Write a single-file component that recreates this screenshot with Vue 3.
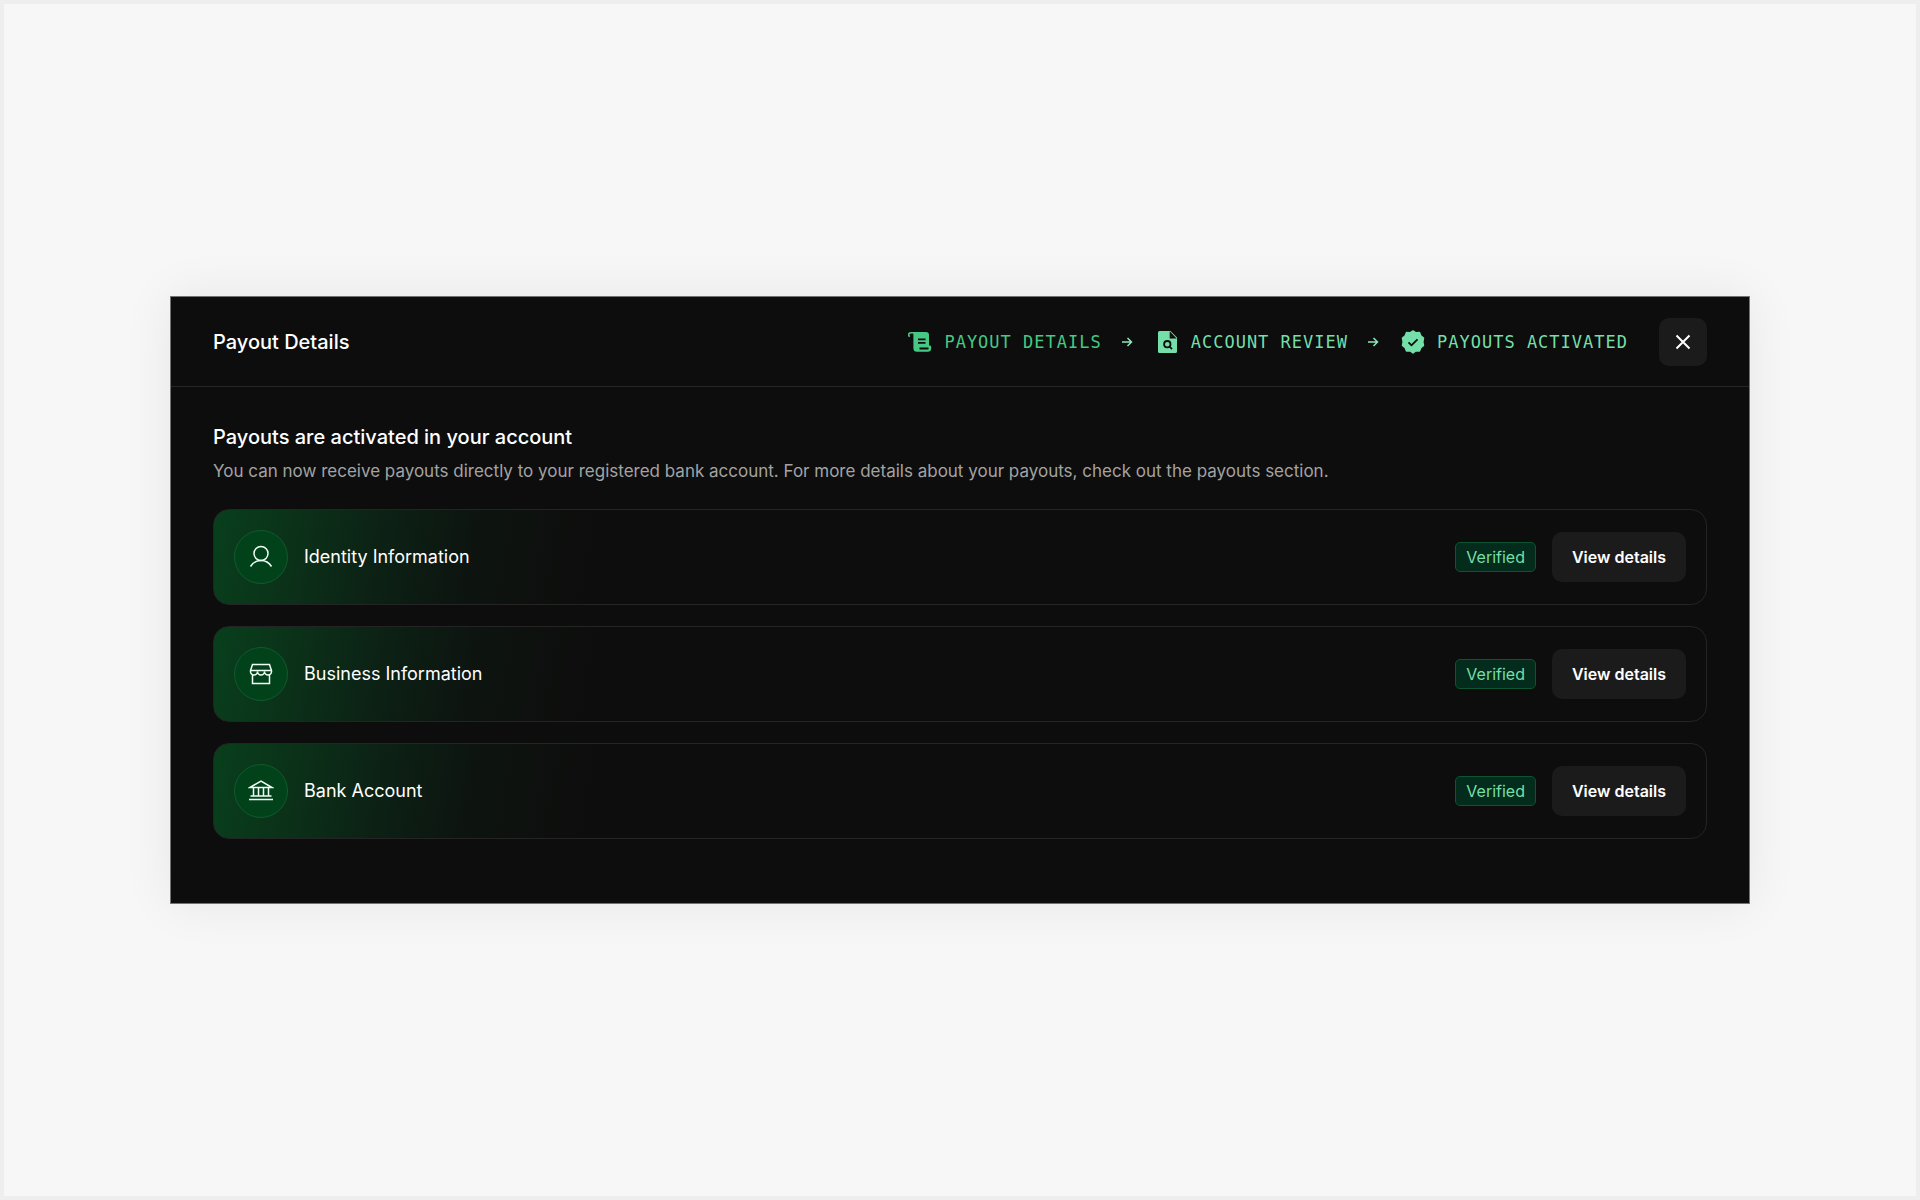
<script setup>
const steps = [
  { id: 'details', label: 'Payout Details' },
  { id: 'review', label: 'Account Review' },
  { id: 'activated', label: 'Payouts Activated' },
]

const sections = [
  { id: 'identity', title: 'Identity Information', status: 'Verified' },
  { id: 'business', title: 'Business Information', status: 'Verified' },
  { id: 'bank', title: 'Bank Account', status: 'Verified' },
]
</script>

<template>
  <main class="page">
    <section class="dialog" role="dialog" aria-labelledby="dialog-title">
      <header class="dialog-header">
        <h1 id="dialog-title" class="title">Payout Details</h1>

        <ol class="steps">
          <li v-for="(step, index) in steps" :key="step.id" class="step" :class="step.id">
            <svg v-if="index > 0" class="arrow" viewBox="0 0 17 16" aria-hidden="true">
              <path d="M4 8h9.5M9.5 4l4 4-4 4" />
            </svg>
            <svg v-if="step.id === 'details'" class="step-icon" viewBox="0 0 24 24" aria-hidden="true">
              <path class="line" d="M1.500 6.800C-.2 4 1 2.800 3.500 2.800h3" />
              <path d="M4 2h14a3 3 0 0 1 3 3v10.500h.8a1.400 1.400 0 0 1 1.400 1.400v1.300a3.600 3.600 0 0 1-3.600 3.600H9A3.600 3.600 0 0 1 5.400 18.200V5A3 3 0 0 0 4 2Z" />
              <path class="cut" d="M10 9.300h7.500M10 12.800h7.500M11.500 18.500h9" />
            </svg>
            <svg v-else-if="step.id === 'review'" class="step-icon" viewBox="0 0 24 24" aria-hidden="true">
              <path d="M4.500 1h11L22 7.500V21.500a1.500 1.500 0 0 1-1.500 1.500h-16A1.500 1.500 0 0 1 3 21.500v-19A1.500 1.500 0 0 1 4.500 1Z" />
              <path class="cut" d="M15.600 3.500v4h3.900z" />
              <circle class="cut" cx="12.300" cy="14.200" r="3.200" />
              <path class="cut" d="m14.600 16.500 2.400 2.600" />
            </svg>
            <svg v-else class="step-icon" viewBox="0 0 24 24" aria-hidden="true">
              <path class="seal" d="M12 1l3 1.800 3.500-.2 1.300 3.200 2.700 2.300L21.800 12l.7 3.400-2.700 2.300-1.300 3.200-3.500-.2L12 23l-3-2.300-3.500.2-1.300-3.200-2.700-2.300.7-3.400-.7-3.900 2.700-2.300 1.300-3.200 3.500.2z" />
              <path class="cut" d="m7.500 12.300 3 3 6-6" />
            </svg>
            <span>{{ step.label }}</span>
          </li>
        </ol>

        <button class="close" type="button" aria-label="Close">
          <svg viewBox="0 0 16 16" aria-hidden="true"><path d="m1.500 1.500 13 13m0-13-13 13" /></svg>
        </button>
      </header>

      <div class="dialog-body">
        <h2 class="heading">Payouts are activated in your account</h2>
        <p class="description">
          You can now receive payouts directly to your registered bank account. For more details about your payouts, check out the payouts section.
        </p>

        <ul class="sections">
          <li v-for="section in sections" :key="section.id" class="section">
            <span class="badge-icon">
              <svg v-if="section.id === 'identity'" viewBox="0 0 26 26" aria-hidden="true">
                <circle cx="13" cy="9.500" r="7" />
                <path d="M2.500 22.500C5 18.500 8.500 16.500 13 16.500s8 2 10.500 6" />
              </svg>
              <svg v-else-if="section.id === 'business'" viewBox="0 0 26 26" aria-hidden="true">
                <path d="M4.500 3.500h17l2 6v1a3.500 3.500 0 0 1-7 0 3.500 3.500 0 0 1-7 0 3.500 3.500 0 0 1-7 0v-1zM2.500 9.500h21M4.500 14v8.500h17V14" />
              </svg>
              <svg v-else viewBox="0 0 26 26" aria-hidden="true">
                <path d="M2 9.500 13 3l11 6.500zM5.500 9.500v8.500M10.500 9.500v8.500M15.500 9.500v8.500M20.500 9.500v8.500M2.500 18h21M1 21.500h24" />
              </svg>
            </span>
            <h3 class="section-title">{{ section.title }}</h3>
            <span class="status">{{ section.status }}</span>
            <button class="view" type="button">View details</button>
          </li>
        </ul>
      </div>
    </section>
  </main>
</template>

<style>
body {
  margin: 0;
}
</style>

<style scoped>
* {
  box-sizing: border-box;
}

.page {
  display: flex;
  align-items: center;
  min-height: 100vh;
  padding: 40px 166px;
  border: 4px solid #eeeeee;
  background: #f7f7f7;
  font-family: Inter, "Liberation Sans", sans-serif;
  color: #ffffff;
}

.dialog {
  flex: 1;
  border: 1px solid #737373;
  background: #0d0d0d;
  box-shadow: 0 0 48px rgba(0, 0, 0, 0.07);
}

.dialog-header {
  display: flex;
  align-items: center;
  padding: 21px 42px 20px;
  border-bottom: 1px solid #262626;
}

.title,
.heading,
.section-title,
.description {
  margin: 0;
}

.title,
.heading {
  font-size: 20px;
  line-height: 28px;
  font-weight: 500;
}

.title {
  flex: 1;
}

.steps,
.sections {
  margin: 0;
  padding: 0;
  list-style: none;
}

.steps {
  display: flex;
  margin-right: 31px;
}

.step {
  display: flex;
  align-items: center;
  gap: 12px;
  color: #74dfa8;
  font-family: "DejaVu Sans Mono", monospace;
  font-size: 17px;
  line-height: 24px;
  letter-spacing: 1px;
  text-transform: uppercase;
  white-space: nowrap;
}

.step.details {
  color: #45c983;
}

.step-icon {
  width: 24px;
  height: 24px;
  fill: currentColor;
}

.step-icon .line {
  fill: none;
  stroke: currentColor;
  stroke-width: 1.6;
}

.step-icon .seal {
  stroke: currentColor;
  stroke-width: 1.5;
  stroke-linejoin: round;
}

.step-icon .cut {
  fill: none;
  stroke: #0d0d0d;
  stroke-width: 1.8;
}

.arrow {
  width: 17px;
  height: 16px;
  margin: 0 8px 0 16px;
  fill: none;
  stroke: #8be8b8;
  stroke-width: 1.5;
}

.close,
.view {
  border: 0;
  border-radius: 10px;
  background: #1b1b1b;
  color: #ffffff;
  font: inherit;
}

.close {
  display: grid;
  place-items: center;
  width: 48px;
  height: 48px;
  padding: 0;
}

.close svg {
  width: 16px;
  height: 16px;
  fill: none;
  stroke: currentColor;
  stroke-width: 2;
}

.dialog-body {
  padding: 36px 42px 64px;
}

.description {
  margin: 8px 0 26px;
  color: #a3a3a3;
  font-size: 17px;
  line-height: 24px;
}

.sections {
  display: grid;
  gap: 21px;
}

.section {
  display: flex;
  align-items: center;
  gap: 16px;
  height: 96px;
  padding: 0 20px;
  border: 1px solid #242424;
  border-radius: 16px;
  background: linear-gradient(100deg, #083f1c 0, #0b3219 80px, #0c2215 165px, #0d1510 255px, #0d0d0d 380px);
}

.badge-icon {
  display: grid;
  place-items: center;
  width: 54px;
  height: 54px;
  border: 1px solid #12592d;
  border-radius: 50%;
  background: #02421a;
}

.badge-icon svg {
  width: 26px;
  height: 26px;
  fill: none;
  stroke: #f0fff6;
  stroke-width: 1.5;
}

.section-title {
  flex: 1;
  font-size: 18px;
  line-height: 24px;
  font-weight: 400;
}

.status {
  padding: 2px 10px;
  border: 1px solid #0d5434;
  border-radius: 5px;
  background: #042c1c;
  color: #74dfa8;
  font-size: 16px;
  line-height: 24px;
}

.view {
  height: 50px;
  padding: 0 20px;
  font-size: 16px;
  font-weight: 600;
}
</style>
